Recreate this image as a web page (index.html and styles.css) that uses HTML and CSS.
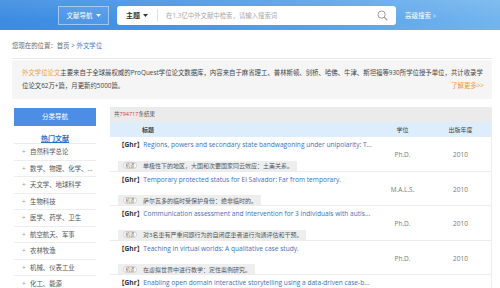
FILE: index.html
```html
<!DOCTYPE html>
<html lang="zh-CN">
<head>
<meta charset="utf-8">
<title>外文学位</title>
<link rel="stylesheet" href="styles.css">
</head>
<body>
<header class="topbar">
  <div class="nav-btn">文献导航<svg class="caret" width="5" height="3" viewBox="0 0 5 3"><path d="M0 0H5L2.5 3Z" fill="#fff"/></svg></div>
  <div class="search">
    <div class="scope">主题<svg class="caret" width="5" height="3" viewBox="0 0 5 3"><path d="M0 0H5L2.5 3Z" fill="#333"/></svg></div>
    <div class="divider"></div>
    <div class="placeholder">在1.3亿中外文献中检索，请输入搜索词</div>
    <svg class="search-icon" width="11" height="11" viewBox="0 0 11 11"><circle cx="4.6" cy="4.6" r="3.6" fill="none" stroke="#9a9a9a" stroke-width="1"/><path d="M7.2 7.2L10 10" stroke="#9a9a9a" stroke-width="1.1" stroke-linecap="round"/></svg>
  </div>
  <div class="adv">高级搜索 <span class="raquo">»</span></div>
</header>

<div class="page">
  <div class="crumb">您现在的位置：首页 &gt; <a class="crumb-cur">外文学位</a></div>

  <div class="intro">
    <p><span class="hl">外文学位论文</span>主要来自于全球最权威的ProQuest学位论文数据库，内容来自于麻省理工、普林斯顿、剑桥、哈佛、牛津、斯坦福等930所学位授予单位，共计收录学<br>位论文62万+篇，月更新约5000篇。<a class="more">了解更多&gt;&gt;</a></p>
  </div>

  <div class="content">
    <aside class="side">
      <div class="side-head">分类导航</div>
      <div class="side-hot"><span>热门文献</span></div>
      <ul class="cats">
        <li><span class="plus">+</span>自然科学总论</li>
        <li><span class="plus">+</span>数学、物理、化学、...</li>
        <li><span class="plus">+</span>天文学、地球科学</li>
        <li><span class="plus">+</span>生物科技</li>
        <li><span class="plus">+</span>医学、药学、卫生</li>
        <li><span class="plus">+</span>航空航天、军事</li>
        <li><span class="plus">+</span>农林牧渔</li>
        <li><span class="plus">+</span>机械、仪表工业</li>
        <li><span class="plus">+</span>化工、能源</li>
      </ul>
    </aside>

    <section class="results">
      <div class="count">共<em>794717</em>条结果</div>
      <div class="grid thead">
        <div class="h-title">标题</div>
        <div class="center">学位</div>
        <div class="center">出版年度</div>
      </div>

      <div class="grid row">
        <div class="cell-title">
          <div class="t"><b>【Ghr】</b><a>Regions, powers and secondary state bandwagoning under unipolarity: T...</a></div>
          <div class="tag"><span class="mt">机译</span>单极性下的地区，大国和次要国家同云效应：土美关系。</div>
        </div>
        <div class="center meta">Ph.D.</div>
        <div class="center meta">2010</div>
      </div>

      <div class="grid row">
        <div class="cell-title">
          <div class="t"><b>【Ghr】</b><a>Temporary protected status for El Salvador: Far from temporary.</a></div>
          <div class="tag"><span class="mt">机译</span>萨尔瓦多的临时受保护身份：绝非临时的。</div>
        </div>
        <div class="center meta">M.A.L.S.</div>
        <div class="center meta">2010</div>
      </div>

      <div class="grid row">
        <div class="cell-title">
          <div class="t"><b>【Ghr】</b><a>Communication assessment and intervention for 3 individuals with autis...</a></div>
          <div class="tag"><span class="mt">机译</span>对3名患有严重问题行为的自闭症患者进行沟通评估和干预。</div>
        </div>
        <div class="center meta">Ph.D.</div>
        <div class="center meta">2010</div>
      </div>

      <div class="grid row">
        <div class="cell-title">
          <div class="t"><b>【Ghr】</b><a>Teaching in virtual worlds: A qualitative case study.</a></div>
          <div class="tag"><span class="mt">机译</span>在虚拟世界中进行教学：定性案例研究。</div>
        </div>
        <div class="center meta">Ph.D.</div>
        <div class="center meta">2010</div>
      </div>

      <div class="grid row row-last">
        <div class="cell-title">
          <div class="t"><b>【Ghr】</b><a>Enabling open domain interactive storytelling using a data-driven case-b...</a></div>
        </div>
      </div>
    </section>
  </div>
</div>
</body>
</html>
```

FILE: styles.css
```css
html, body {
  margin: 0;
  padding: 0;
  overflow: hidden;
  background: #fff;
}
body {
  width: 500px;
  height: 288px;
  font-family: "Open Sans", "Noto Sans CJK SC", sans-serif;
  color: #555;
}
a { text-decoration: none; }

/* ---------- top bar ---------- */
.topbar {
  height: 30px;
  display: flex;
  align-items: center;
  padding-left: 58px;
  box-sizing: border-box;
  background:
    linear-gradient(180deg, rgba(255,255,255,0.10), rgba(255,255,255,0) 70%),
    linear-gradient(90deg, #3b8be2 0%, #4795e6 35%, #58a3ea 65%, #72b5ee 100%);
}
.nav-btn {
  width: 51px;
  height: 19px;
  box-sizing: border-box;
  border: 1px solid rgba(255,255,255,0.45);
  background: rgba(255,255,255,0.08);
  color: #fff;
  font-size: 6.5px;
  line-height: 17px;
  display: flex;
  align-items: center;
  justify-content: center;
  gap: 3px;
}
.search {
  margin-left: 8px;
  width: 279px;
  height: 19px;
  background: #fff;
  border-radius: 3px;
  display: flex;
  align-items: center;
}
.scope {
  width: 40px;
  box-sizing: border-box;
  padding-left: 9px;
  font-size: 7px;
  font-weight: bold;
  color: #333;
  display: flex;
  align-items: center;
  gap: 3px;
}
.divider {
  width: 1px;
  height: 13px;
  background: #e2e2e2;
}
.placeholder {
  margin-left: 8px;
  font-size: 6.4px;
  color: #a8a8a8;
}
.search-icon {
  margin-left: auto;
  margin-right: 8px;
}
.adv {
  margin-left: 9px;
  font-size: 6.5px;
  color: #fff;
}
.raquo { opacity: 0.7; }

/* ---------- page ---------- */
.page {
  padding: 0 8px 0 12px;
}
.crumb {
  padding-top: 10px;
  padding-bottom: 6px;
  line-height: 12px;
  font-size: 6.4px;
  color: #666;
  border-bottom: 1px solid #e6e6e6;
}
.crumb-cur { color: #3a7bd5; }

.intro {
  margin-top: 1px;
  height: 39px;
  box-sizing: border-box;
  padding: 6px 8px 0 10px;
  background: #f5f5f5;
}
.intro p {
  margin: 0;
  font-size: 6.4px;
  line-height: 13px;
  color: #444;
  white-space: nowrap;
}
.hl { color: #f0a03c; }
.more {
  float: right;
  color: #f0983a;
}

/* ---------- content ---------- */
.content {
  margin-top: 8px;
  display: flex;
  align-items: flex-start;
}
.side {
  margin-left: 2px;
  width: 82px;
  flex: none;
}
.side-head {
  margin-top: 1px;
  height: 18px;
  line-height: 18px;
  text-align: center;
  background: #4c8ee5;
  color: #fff;
  font-size: 6.5px;
}
.side-hot {
  height: 17px;
  line-height: 18px;
  text-align: center;
  border-bottom: 1px solid #ececec;
}
.side-hot span {
  font-size: 7px;
  font-weight: bold;
  color: #2f6cc4;
  text-decoration: underline;
}
.cats {
  list-style: none;
  margin: 0;
  padding: 0;
}
.cats li {
  height: 15.5px;
  line-height: 16px;
  border-bottom: 1px solid #ededed;
  padding-left: 8px;
  font-size: 6.4px;
  color: #555;
  white-space: nowrap;
}
.plus {
  display: inline-block;
  width: 8px;
  color: #999;
}

.results {
  margin-left: 14px;
  width: 382px;
  flex: none;
  border-right: 1px solid #ececec;
  box-sizing: border-box;
}
.count {
  height: 15px;
  line-height: 15px;
  background: #ebebeb;
  padding-left: 4px;
  font-size: 5.5px;
  color: #555;
}
.count em {
  font-style: normal;
  color: #e0363a;
}
.grid {
  display: grid;
  grid-template-columns: 265px 55px 61px;
  align-items: center;
}
.thead {
  height: 15px;
  background: #deedfb;
  font-size: 6px;
  color: #444;
}
.h-title {
  padding-left: 32px;
  font-weight: bold;
}
.center { text-align: center; }

.row {
  height: 34.5px;
  box-sizing: border-box;
  border-bottom: 1px solid #ececec;
}
.row-last {
  height: 14px;
  border-bottom: 0;
}
.cell-title {
  align-self: start;
  padding: 3px 0 0 8px;
  min-width: 0;
}
.t {
  height: 10px;
  line-height: 10px;
  font-size: 6.6px;
  white-space: nowrap;
  color: #3c6fc2;
}
.t b {
  color: #333;
  font-weight: bold;
}
.tag {
  margin-top: 3px;
  display: inline-flex;
  align-items: center;
  height: 10px;
  padding: 0 4px 0 5px;
  background: #eeeeee;
  font-size: 6px;
  color: #555;
  white-space: nowrap;
}
.mt {
  width: 14px;
  height: 7px;
  box-sizing: border-box;
  margin-right: 6px;
  border: 1px solid #cfcfcf;
  border-radius: 4px;
  background: #fff;
  font-size: 4.5px;
  line-height: 5px;
  text-align: center;
  color: #666;
}
.meta {
  font-size: 6.5px;
  color: #777;
}
```
